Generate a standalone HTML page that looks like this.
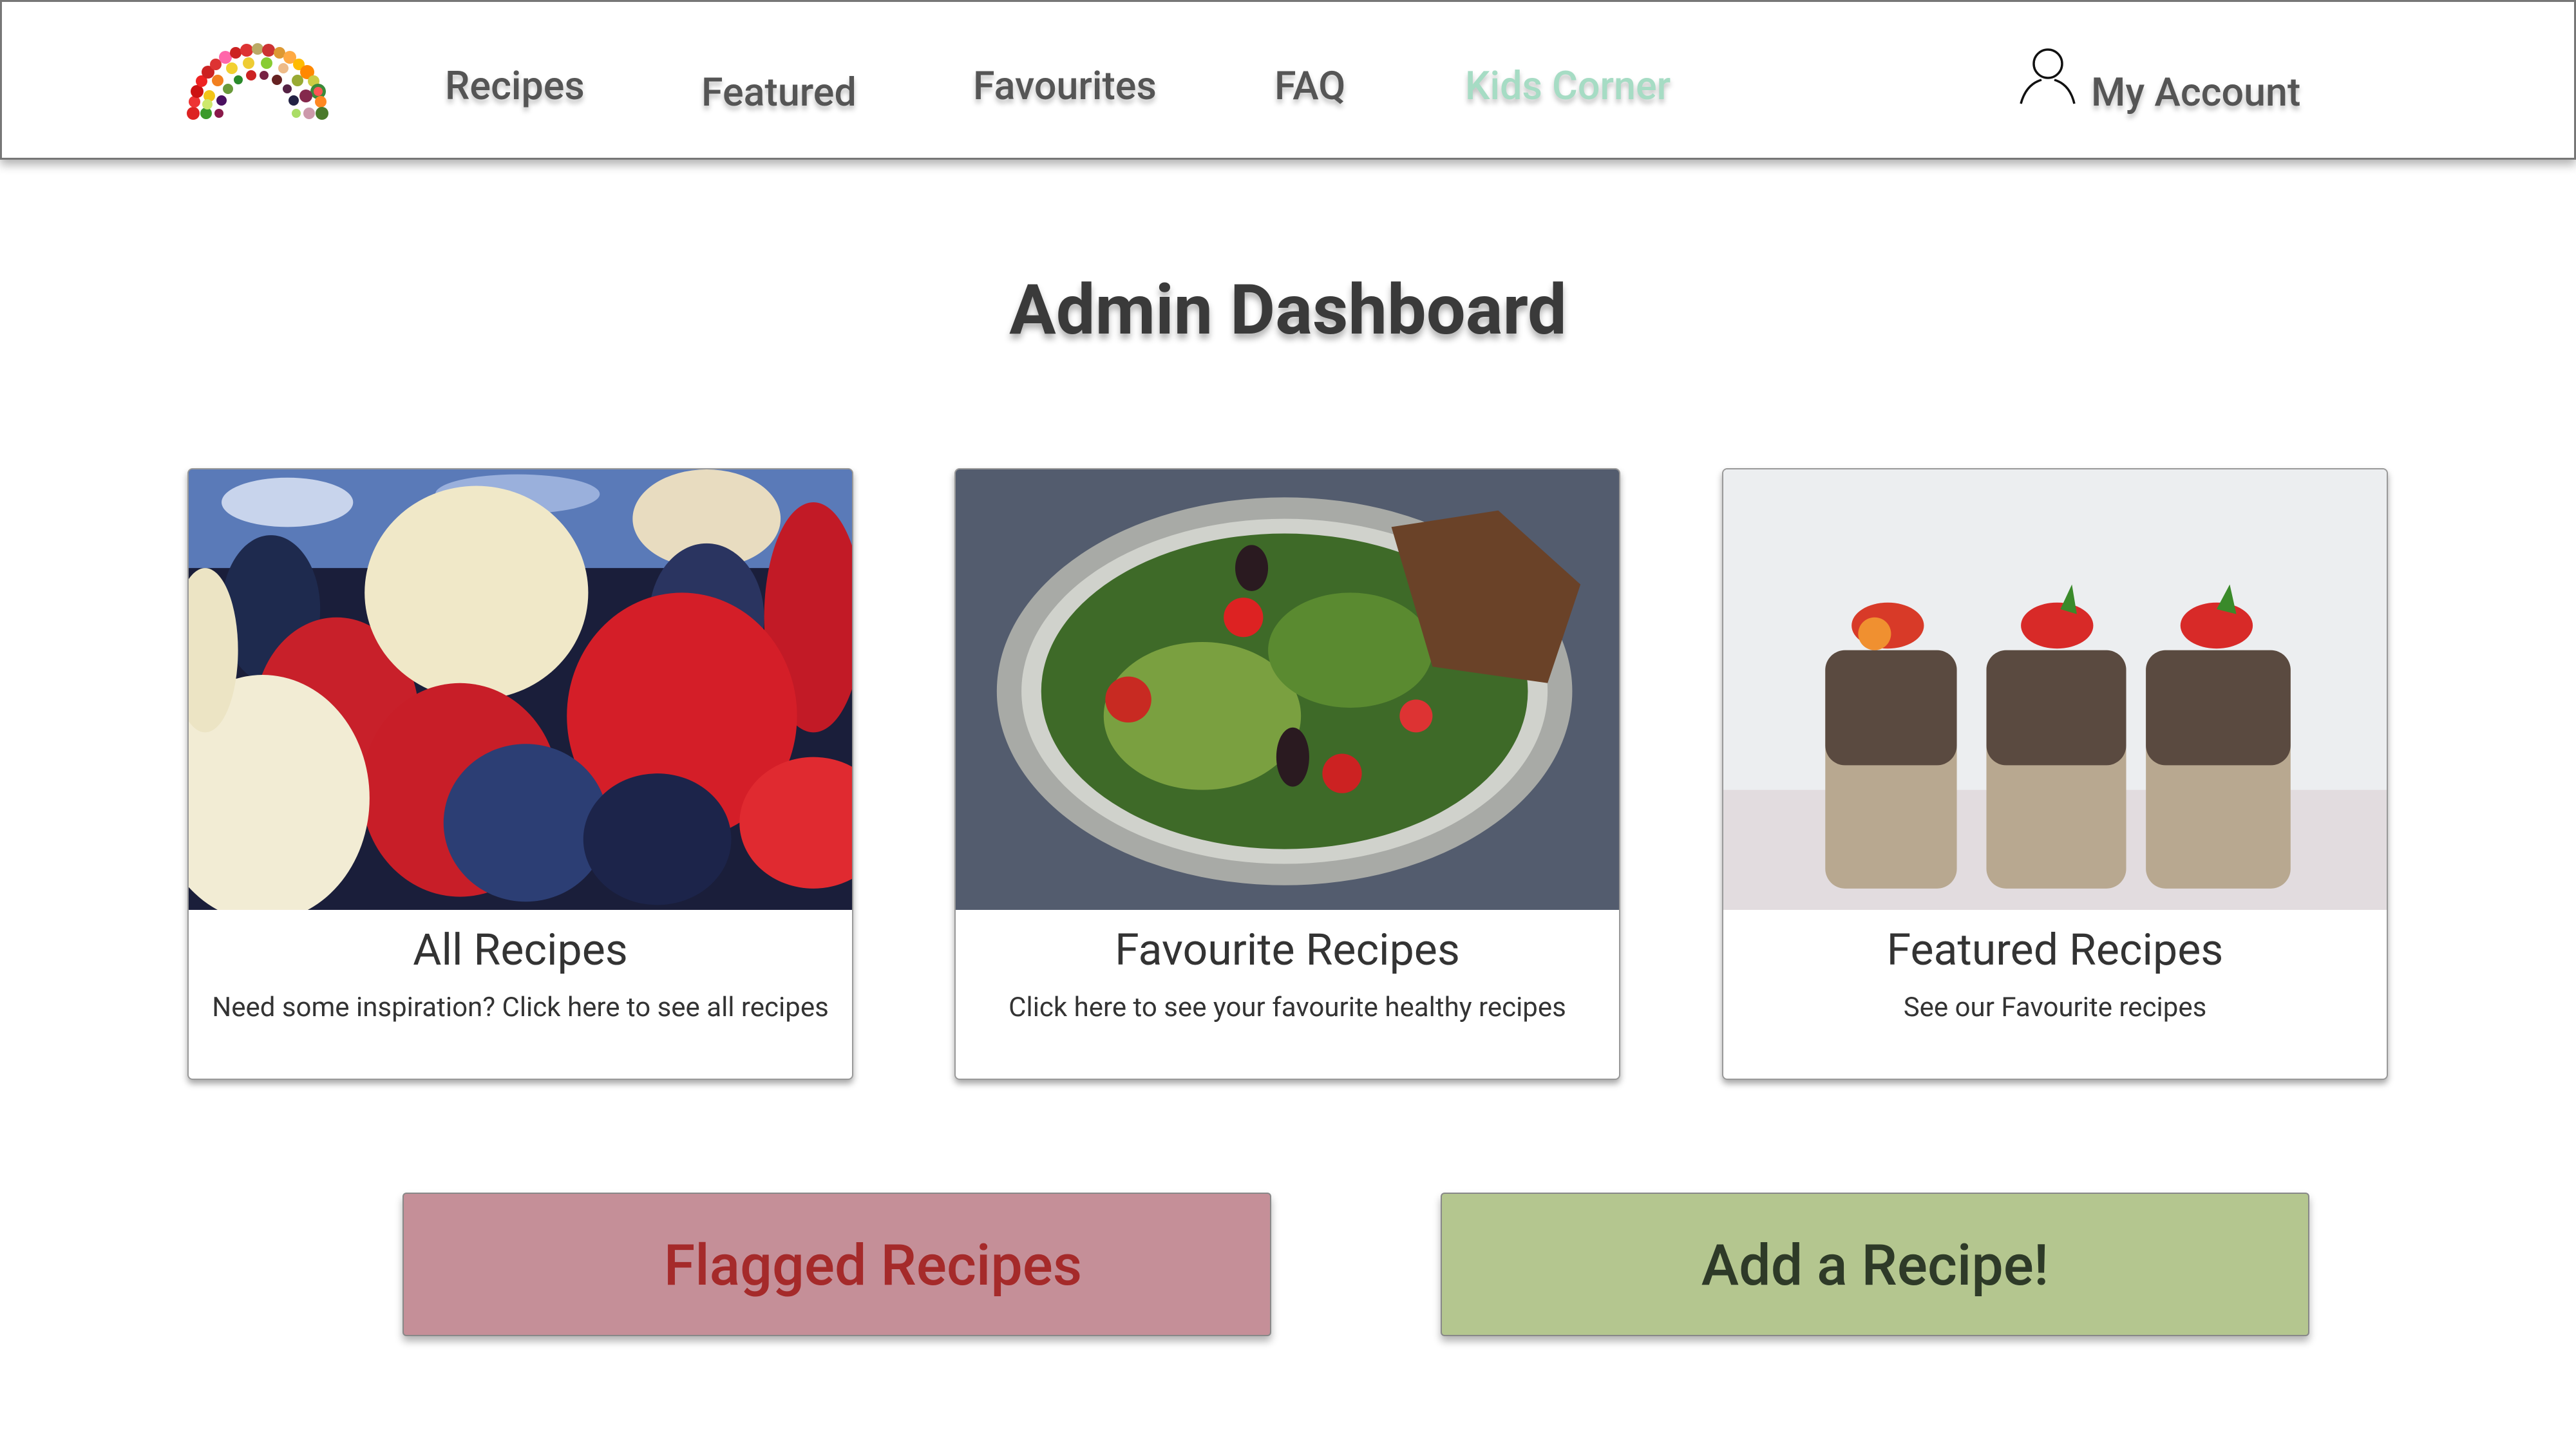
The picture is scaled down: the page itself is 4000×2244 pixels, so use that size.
<!DOCTYPE html>
<html><head><meta charset="utf-8"><style>
*{margin:0;padding:0;box-sizing:border-box}
body{width:4000px;height:2244px;background:#fff;position:relative;overflow:hidden;font-family:"Roboto","Liberation Sans",sans-serif}
.nav{position:absolute;left:0;top:0;width:4000px;height:248px;border:3px solid #777;background:#fff;box-shadow:0 8px 14px rgba(0,0,0,.3)}
.nl{position:absolute;font-size:61px;font-weight:500;color:#555;text-shadow:0 6px 8px rgba(0,0,0,.25);top:100px;line-height:1}
h1{position:absolute;left:0;width:4000px;text-align:center;top:428px;font-size:108px;font-weight:bold;color:#3a3a3a;text-shadow:0 8px 10px rgba(0,0,0,.3);line-height:1}
.card{position:absolute;top:727px;width:1034px;height:950px;background:#fff;border:2px solid #999;border-radius:8px;box-shadow:0 6px 10px rgba(0,0,0,.35);overflow:hidden}
.card svg{position:absolute;left:0;top:0;width:1034px;height:684px;display:block}
.card .t{position:absolute;top:712px;width:100%;text-align:center;font-size:68px;color:#333;line-height:1}
.card .s{position:absolute;top:815px;width:100%;text-align:center;font-size:42px;color:#333;line-height:1}
.btn{position:absolute;top:1852px;width:1349px;height:223px;border:2px solid #888;border-radius:6px;box-shadow:0 8px 12px rgba(0,0,0,.3);text-align:center;line-height:223px;font-size:88px;font-weight:500}
</style></head><body>
<div class="nav">
<svg style="position:absolute;left:285px;top:45px" width="225" height="140" viewBox="0 0 225 140">
<g>
<circle cx="12" cy="128" r="10" fill="#d22"/><circle cx="14" cy="110" r="9" fill="#e33"/><circle cx="18" cy="94" r="10" fill="#c11"/><circle cx="25" cy="78" r="9" fill="#e22"/><circle cx="35" cy="64" r="10" fill="#c22"/><circle cx="47" cy="52" r="9" fill="#d33"/><circle cx="62" cy="41" r="10" fill="#f6a"/><circle cx="78" cy="34" r="9" fill="#c22"/><circle cx="95" cy="30" r="10" fill="#d33"/><circle cx="112" cy="28" r="9" fill="#ba6"/><circle cx="129" cy="30" r="10" fill="#c33"/><circle cx="146" cy="34" r="9" fill="#d93"/><circle cx="162" cy="41" r="10" fill="#fa4"/><circle cx="176" cy="52" r="9" fill="#fb0"/><circle cx="189" cy="64" r="11" fill="#f80"/><circle cx="199" cy="78" r="9" fill="#cc4"/><circle cx="206" cy="94" r="12" fill="#3a8a3a"/><circle cx="206" cy="94" r="7" fill="#f55"/><circle cx="210" cy="110" r="9" fill="#f82"/><circle cx="212" cy="128" r="10" fill="#4a7a2a"/>
<circle cx="32" cy="128" r="9" fill="#3a9a2a"/><circle cx="37" cy="101" r="9" fill="#f2c418"/><circle cx="50" cy="77" r="9" fill="#f28020"/><circle cx="72" cy="58" r="9" fill="#f2d030"/><circle cx="98" cy="50" r="9" fill="#ec3"/><circle cx="126" cy="50" r="9" fill="#8c3"/><circle cx="152" cy="58" r="8" fill="#eb8"/><circle cx="174" cy="77" r="9" fill="#9a3"/><circle cx="187" cy="101" r="10" fill="#84284c"/><circle cx="192" cy="128" r="9" fill="#c9a"/><circle cx="34" cy="114" r="8" fill="#cde86b"/>
<circle cx="52" cy="128" r="7" fill="#8a1a4a"/><circle cx="56" cy="108" r="8" fill="#4a1060"/><circle cx="66" cy="90" r="8" fill="#6a9a3a"/><circle cx="82" cy="76" r="7" fill="#2a8a2a"/><circle cx="102" cy="69" r="8" fill="#c22"/><circle cx="122" cy="69" r="7" fill="#724"/><circle cx="142" cy="76" r="8" fill="#622"/><circle cx="158" cy="90" r="7" fill="#524"/><circle cx="168" cy="108" r="8" fill="#224"/><circle cx="172" cy="128" r="7" fill="#ad6"/>
</g></svg>
<div class="nl" style="left:688px">Recipes</div>
<div class="nl" style="left:1086px;top:110px">Featured</div>
<div class="nl" style="left:1508px">Favourites</div>
<div class="nl" style="left:1976px">FAQ</div>
<div class="nl" style="left:2272px;color:#a6dcc4">Kids Corner</div>
<svg style="position:absolute;left:3125px;top:66px" width="100" height="100" viewBox="0 0 100 100"><circle cx="52" cy="30" r="22" fill="none" stroke="#111" stroke-width="3.5"/><path d="M10 92 Q18 62 42 55 M62 55 Q86 62 93 92" fill="none" stroke="#111" stroke-width="3.5"/></svg>
<div class="nl" style="left:3244px;top:110px">My Account</div>
</div>

<h1>Admin Dashboard</h1>

<div class="card" style="left:291px">
<svg viewBox="0 0 405 268" preserveAspectRatio="none">
<rect width="405" height="268" fill="#1a1e3a"/>
<rect width="405" height="60" fill="#5a7ab8"/>
<ellipse cx="60" cy="20" rx="40" ry="15" fill="#c8d4ec"/><ellipse cx="200" cy="15" rx="50" ry="12" fill="#9ab0dc"/>
<ellipse cx="315" cy="30" rx="45" ry="30" fill="#e8dcc0"/>
<ellipse cx="380" cy="90" rx="30" ry="70" fill="#c21a26"/>
<ellipse cx="50" cy="85" rx="30" ry="45" fill="#1e2a4e"/>
<ellipse cx="315" cy="90" rx="35" ry="45" fill="#2a3460"/>
<ellipse cx="90" cy="150" rx="50" ry="60" fill="#c8202a"/>
<ellipse cx="175" cy="75" rx="68" ry="65" fill="#f0e8c8"/>
<ellipse cx="300" cy="150" rx="70" ry="75" fill="#d41e28"/>
<ellipse cx="165" cy="195" rx="60" ry="65" fill="#c81e28"/>
<ellipse cx="45" cy="200" rx="65" ry="75" fill="#f2ecd4"/>
<ellipse cx="10" cy="110" rx="20" ry="50" fill="#ece4c4"/>
<ellipse cx="205" cy="215" rx="50" ry="48" fill="#2c3e74"/>
<ellipse cx="285" cy="225" rx="45" ry="40" fill="#1c244a"/>
<ellipse cx="380" cy="215" rx="45" ry="40" fill="#e02a30"/>
</svg>
<div class="t">All Recipes</div><div class="s">Need some inspiration? Click here to see all recipes</div></div>

<div class="card" style="left:1482px">
<svg viewBox="0 0 405 268" preserveAspectRatio="none">
<rect width="405" height="268" fill="#4c5566"/>
<rect x="0" y="0" width="405" height="268" fill="#5a6476" opacity=".5"/>
<ellipse cx="200" cy="135" rx="175" ry="118" fill="#a8aaa6"/>
<ellipse cx="200" cy="135" rx="160" ry="105" fill="#d0d2cc"/>
<ellipse cx="200" cy="135" rx="148" ry="96" fill="#3e6a28"/>
<ellipse cx="150" cy="150" rx="60" ry="45" fill="#7aa040"/><ellipse cx="240" cy="110" rx="50" ry="35" fill="#5a8a30"/>
<circle cx="105" cy="140" r="14" fill="#c82a22"/><circle cx="175" cy="90" r="12" fill="#d22"/><circle cx="235" cy="185" r="12" fill="#c22"/><circle cx="280" cy="150" r="10" fill="#d33"/>
<ellipse cx="205" cy="175" rx="10" ry="18" fill="#2a1a20"/><ellipse cx="180" cy="60" rx="10" ry="14" fill="#2a1a20"/>
<path d="M265 35 L330 25 L380 70 L360 130 L290 120 Z" fill="#6a4228"/>
</svg>
<div class="t">Favourite Recipes</div><div class="s">Click here to see your favourite healthy recipes</div></div>

<div class="card" style="left:2674px">
<svg viewBox="0 0 405 268" preserveAspectRatio="none">
<rect width="405" height="268" fill="#eceef0"/>
<rect y="195" width="405" height="73" fill="#e2dcdf"/>
<g><rect x="62" y="110" width="80" height="145" rx="12" fill="#b8a890"/><rect x="62" y="110" width="80" height="70" rx="12" fill="#5a4a40"/><ellipse cx="100" cy="95" rx="22" ry="14" fill="#d83a28"/><ellipse cx="92" cy="100" rx="10" ry="10" fill="#f09030"/></g>
<g><rect x="160" y="110" width="85" height="145" rx="12" fill="#b8a890"/><rect x="160" y="110" width="85" height="70" rx="12" fill="#5a4a40"/><ellipse cx="203" cy="95" rx="22" ry="14" fill="#d82a28"/><path d="M205 85 L212 70 L215 88Z" fill="#3a8a2a"/></g>
<g><rect x="257" y="110" width="88" height="145" rx="12" fill="#b8a890"/><rect x="257" y="110" width="88" height="70" rx="12" fill="#5a4a40"/><ellipse cx="300" cy="95" rx="22" ry="14" fill="#d82a28"/><path d="M300 85 L308 70 L312 88Z" fill="#3a8a2a"/></g>
</svg>
<div class="t">Featured Recipes</div><div class="s">See our Favourite recipes</div></div>

<div class="btn" style="left:625px;background:#c58f98;color:#a52a2a;padding-left:112px">Flagged Recipes</div>
<div class="btn" style="left:2237px;background:#b4c68f;color:#2e3a28">Add a Recipe!</div>
</body></html>
